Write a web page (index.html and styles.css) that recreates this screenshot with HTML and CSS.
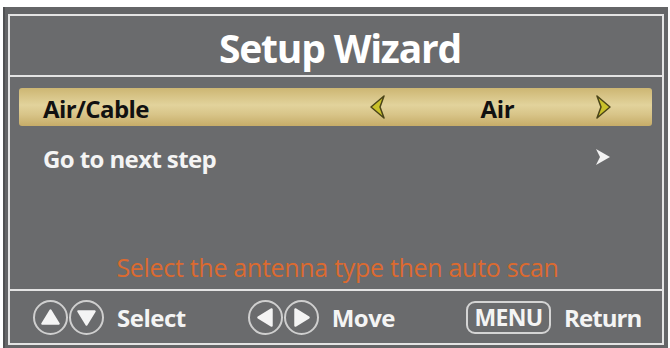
FILE: index.html
```html
<!DOCTYPE html>
<html>
<head>
<meta charset="utf-8">
<link rel="stylesheet" href="styles.css">
</head>
<body>
<div class="frame">
  <div class="panel">
    <div class="title">Setup Wizard</div>
    <div class="content">
      <div class="row row-active">
        <span class="label">Air/Cable</span>
        <div class="value">
          <svg class="tri" width="18" height="26" viewBox="0 0 18 26"><path d="M15 2 L2 13 L15 24 L11 13 Z" fill="#c9c12a" stroke="#4a4418" stroke-width="1.5" stroke-linejoin="round"/></svg>
          <span class="value-text">Air</span>
          <svg class="tri" width="18" height="26" viewBox="0 0 18 26"><path d="M3 2 L16 13 L3 24 L7 13 Z" fill="#c9c12a" stroke="#4a4418" stroke-width="1.5" stroke-linejoin="round"/></svg>
        </div>
      </div>
      <div class="row">
        <span class="label light">Go to next step</span>
        <svg class="chev" width="16" height="18" viewBox="0 0 16 18"><path d="M1 1 L15 9 L1 17 L5 9 Z" fill="#f2f2f2"/></svg>
      </div>
      <div class="hint">Select the antenna type then auto scan</div>
    </div>
    <div class="footer">
      <div class="group">
        <span class="circle"><svg width="31" height="31" viewBox="0 0 30 30"><path d="M15 8 L23 21 L7 21 Z" fill="#f4f4f4" stroke="#f4f4f4" stroke-width="2" stroke-linejoin="round"/></svg></span>
        <span class="circle"><svg width="31" height="31" viewBox="0 0 30 30"><path d="M15 22 L23 9 L7 9 Z" fill="#f4f4f4" stroke="#f4f4f4" stroke-width="2" stroke-linejoin="round"/></svg></span>
        <span class="ftext">Select</span>
      </div>
      <div class="group">
        <span class="circle"><svg width="31" height="31" viewBox="0 0 30 30"><path d="M8 15 L21 7 L21 23 Z" fill="#f4f4f4" stroke="#f4f4f4" stroke-width="2" stroke-linejoin="round"/></svg></span>
        <span class="circle"><svg width="31" height="31" viewBox="0 0 30 30"><path d="M22 15 L9 7 L9 23 Z" fill="#f4f4f4" stroke="#f4f4f4" stroke-width="2" stroke-linejoin="round"/></svg></span>
        <span class="ftext">Move</span>
      </div>
      <div class="group">
        <span class="menu">MENU</span>
        <span class="ftext ret">Return</span>
      </div>
    </div>
  </div>
</div>
</body>
</html>
```

FILE: styles.css
```css
html, body {
  margin: 0;
  padding: 0;
  background: #ffffff;
}

body {
  font-family: "Open Sans", "Liberation Sans", sans-serif;
  width: 670px;
  height: 348px;
  overflow: hidden;
}

.frame {
  margin: 7px 0 0 3px;
  width: 665px;
  height: 341px;
  box-sizing: border-box;
  background: #646567;
  border-left: 2px solid #505153;
  padding: 7px 4px 0 3px;
}

.panel {
  width: 656px;
  height: 331px;
  box-sizing: border-box;
  border: 2px solid #e4e4e4;
  display: flex;
  flex-direction: column;
  background: #6a6b6d;
}

.title {
  height: 61px;
  display: flex;
  align-items: center;
  justify-content: center;
  color: #ffffff;
  font-weight: 700;
  font-size: 39px;
  letter-spacing: -1.2px;
  border-bottom: 2px solid #e4e4e4;
  padding-top: 4px;
  padding-left: 8px;
  box-sizing: border-box;
}

.content {
  height: 214px;
  box-sizing: border-box;
  padding: 11px 10px 0 9px;
  display: flex;
  flex-direction: column;
  gap: 11px;
  border-bottom: 2px solid #e4e4e4;
}

.row {
  height: 40px;
  display: flex;
  align-items: center;
  padding-left: 24px;
  padding-right: 43px;
  justify-content: space-between;
}

.row-active {
  height: 38px;
  background: linear-gradient(to bottom, #cdb673 0%, #e2d39c 45%, #d8c488 70%, #c6ac68 100%);
  border-radius: 3px;
}

.label {
  font-size: 24px;
  font-weight: 700;
  color: #111111;
  letter-spacing: -0.6px;
  padding-top: 2px;
}

.label.light {
  color: #f4f4f4;
}

.value {
  width: 243px;
  display: flex;
  align-items: center;
  justify-content: space-between;
  margin-right: -3px;
}

.value-text {
  font-size: 24px;
  font-weight: 700;
  color: #111111;
  letter-spacing: -0.3px;
  margin-left: 14px;
  padding-top: 2px;
}

.chev {
  margin-right: -2px;
}

.hint {
  margin-top: 62px;
  text-align: center;
  color: #dc6a30;
  font-size: 25px;
  letter-spacing: -0.3px;
  margin-left: 4px;
}

.footer {
  flex: 1;
  display: flex;
  align-items: center;
  padding-left: 23px;
  padding-top: 1px;
  box-sizing: border-box;
}

.group {
  display: flex;
  align-items: center;
}

.group:nth-child(2) {
  margin-left: 62px;
}

.group:nth-child(3) {
  margin-left: 71px;
}

.circle {
  width: 31px;
  height: 31px;
  border: 2px solid #cfcfcf;
  border-radius: 50%;
  display: flex;
  align-items: center;
  justify-content: center;
  margin-right: 1px;
}

.ftext {
  color: #f4f4f4;
  font-size: 24px;
  font-weight: 700;
  margin-left: 12px;
  letter-spacing: -0.5px;
}

.ftext.ret {
  margin-left: 13px;
  letter-spacing: -0.9px;
}

.menu {
  border: 2px solid #d4d4d4;
  border-radius: 9px;
  color: #f4f4f4;
  font-size: 23px;
  font-weight: 700;
  height: 29px;
  line-height: 29px;
  width: 81px;
  text-align: center;
  letter-spacing: -0.7px;
}
```
